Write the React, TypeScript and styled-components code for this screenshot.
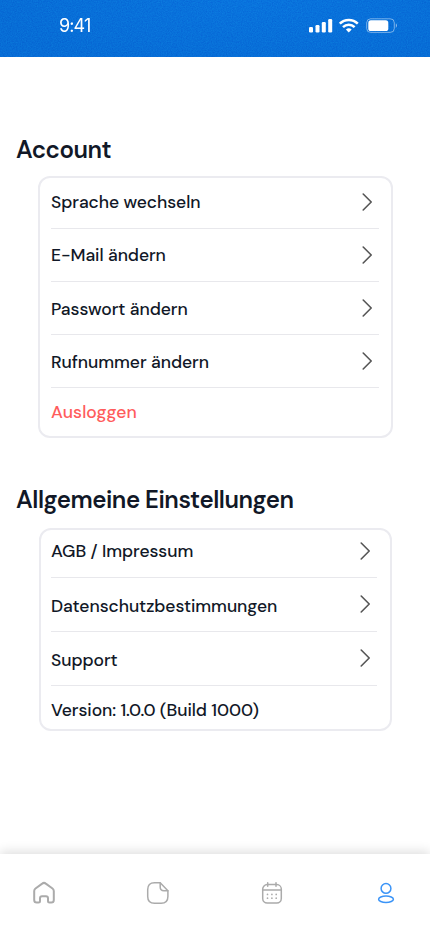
import React from "react";
import styled, { createGlobalStyle } from "styled-components";

const GlobalStyle = createGlobalStyle`
  * { box-sizing: border-box; }
  body { margin: 0; background: #fff; }
`;

const Screen = styled.div`
  width: 430px;
  height: 932px;
  display: flex;
  flex-direction: column;
  background: #fff;
  color: #111827;
  font-family: "DM Sans", "Inter", sans-serif;
  overflow: hidden;
`;

const StatusBar = styled.header`
  position: relative;
  isolation: isolate;
  height: 57px;
  flex: none;
  display: flex;
  justify-content: space-between;
  align-items: flex-start;
  padding: 15px 33px 0 59px;
  background: radial-gradient(ellipse 260px 70px at 58% 0, #0974de, #076dd6);
  color: #fff;
`;

const Grain = styled.svg`
  position: absolute;
  inset: 0;
  width: 100%;
  height: 100%;
  opacity: 0.26;
  mix-blend-mode: soft-light;
`;

const Clock = styled.span`
  position: relative;
  font-family: "Inter", sans-serif;
  font-size: 18px;
  line-height: 22px;
  letter-spacing: -0.9px;
`;

const StatusIcons = styled.svg`
  position: relative;
  width: 89px;
  height: 18px;
  margin-top: 2px;
`;

const Content = styled.main`
  flex: 1;
`;

const Section = styled.section<{ $top: number }>`
  padding-top: ${(p) => p.$top}px;
`;

const Title = styled.h1`
  margin: 0 0 0 16px;
  height: 32px;
  font-size: 24px;
  font-weight: 600;
  line-height: 33px;
  white-space: nowrap;
  letter-spacing: -0.45px;
`;

const Card = styled.div<{ $left: number; $right: number; $gap: number; $inset: number; $end: number }>`
  margin: ${(p) => p.$gap}px ${(p) => p.$right}px 0 ${(p) => p.$left}px;
  padding: 0 ${(p) => p.$end}px 0 ${(p) => p.$inset}px;
  border: 2px solid #ebebf0;
  border-radius: 12px;
`;

const Row = styled.div<{ $height: number; $raise: number; $last?: boolean }>`
  height: ${(p) => p.$height}px;
  display: flex;
  align-items: center;
  justify-content: space-between;
  padding: 0 6px ${(p) => p.$raise}px 0;
  border-bottom: ${(p) => (p.$last ? "0" : "1px solid #e8e8ec")};
`;

const Label = styled.span<{ $drop?: number; $danger?: boolean }>`
  font-size: 17.5px;
  font-weight: 500;
  line-height: 22px;
  margin-top: ${(p) => p.$drop ?? 0}px;
  white-space: nowrap;
  letter-spacing: ${(p) => (p.$danger ? 0.08 : -0.06)}px;
  color: ${(p) => (p.$danger ? "#ff5c5c" : "#111827")};
`;

const Tabs = styled.nav`
  height: 78px;
  flex: none;
  display: flex;
  justify-content: space-between;
  padding: 27px 32px 0;
  background: #fff;
  box-shadow: 0 -3px 10px rgba(0, 0, 0, 0.12);
`;

const TabIcon = styled.svg<{ $active?: boolean }>`
  width: 24px;
  height: 24px;
  fill: none;
  stroke: ${(p) => (p.$active ? "#3b94f7" : "#ababab")};
  stroke-width: 1.5;
  stroke-linecap: round;
  stroke-linejoin: round;
`;

const ChevronIcon = styled.svg`
  width: 12px;
  height: 20px;
  flex: none;
  fill: none;
  stroke: #555;
  stroke-width: 1.6;
  stroke-linecap: round;
  stroke-linejoin: round;
`;

const Chevron = () => (
  <ChevronIcon viewBox="0 0 12 20">
    <path d="M2.2 2l8 8-8 8" />
  </ChevronIcon>
);

type Item = {
  text: string;
  height: number;
  raise: number;
  drop?: number;
  danger?: boolean;
  last?: boolean;
};

const accountItems: Item[] = [
  { text: "Sprache wechseln", height: 51, raise: 2 },
  { text: "E-Mail ändern", height: 53, raise: 0 },
  { text: "Passwort ändern", height: 53, raise: 0, drop: 2 },
  { text: "Rufnummer ändern", height: 53, raise: 0, drop: 2 },
  { text: "Ausloggen", height: 48, raise: 0, danger: true, last: true },
];

const generalItems: Item[] = [
  { text: "AGB / Impressum", height: 48, raise: 5 },
  { text: "Datenschutzbestimmungen", height: 54, raise: 1, drop: 4 },
  { text: "Support", height: 54, raise: 1, drop: 4 },
  { text: "Version: 1.0.0 (Build 1000)", height: 43, raise: 0, drop: 5, last: true },
];

const Rows = ({ items }: { items: Item[] }) => (
  <>
    {items.map((it) => (
      <Row key={it.text} $height={it.height} $raise={it.raise} $last={it.last}>
        <Label $drop={it.drop} $danger={it.danger}>
          {it.text}
        </Label>
        {!it.last && <Chevron />}
      </Row>
    ))}
  </>
);

export default function App() {
  return (
    <Screen>
      <GlobalStyle />
      <StatusBar>
        <Grain>
          <filter id="grain" x="0" y="0" width="100%" height="100%" colorInterpolationFilters="sRGB">
            <feTurbulence type="fractalNoise" baseFrequency="0.8" numOctaves="2" />
            <feColorMatrix values="1 0 0 0 0  1 0 0 0 0  1 0 0 0 0  0 0 0 0 1" />
          </filter>
          <rect width="100%" height="100%" filter="url(#grain)" />
        </Grain>
        <Clock>9:41</Clock>
        <StatusIcons viewBox="0 0 89 18" fill="#fff">
          <rect x="1" y="10" width="4" height="5.5" rx="1.2" />
          <rect x="7.5" y="8" width="4" height="7.5" rx="1.2" />
          <rect x="13.8" y="5" width="4" height="10.5" rx="1.2" />
          <rect x="20.2" y="2" width="4" height="13.5" rx="1.2" />
          <g fill="none" stroke="#fff" strokeWidth="2.5">
            <path d="M31.8 6.7a12.8 12.8 0 0 1 18 0" />
            <path d="M35 10.1a8.2 8.2 0 0 1 11.6 0" />
          </g>
          <path d="M37.9 12.6a4.2 4.2 0 0 1 5.8 0l-2.9 3z" />
          <rect x="58.7" y="1.8" width="27.6" height="13.6" rx="4" fill="none" stroke="#fff" strokeOpacity="0.45" />
          <rect x="60.3" y="3.3" width="20" height="10.7" rx="2.6" />
          <path d="M87.8 6.5v4.2c1.6-.7 1.6-3.5 0-4.2z" fillOpacity="0.5" />
        </StatusIcons>
      </StatusBar>
      <Content>
        <Section $top={76}>
          <Title>Account</Title>
          <Card $left={38} $right={37} $gap={11} $inset={11} $end={12}>
            <Rows items={accountItems} />
          </Card>
        </Section>
        <Section $top={45}>
          <Title>Allgemeine Einstellungen</Title>
          <Card $left={39} $right={38} $gap={13} $inset={10} $end={13}>
            <Rows items={generalItems} />
          </Card>
        </Section>
      </Content>
      <Tabs>
        <TabIcon viewBox="0 0 24 24">
          <path strokeWidth="2" d="M2.2 10.1c0-1.1.5-2 1.3-2.6l6.7-4.9c1-.8 2.6-.8 3.6 0l6.7 4.9c.8.6 1.3 1.5 1.3 2.6v9c0 1.6-1 2.5-2.5 2.5h-1.8c-.9 0-1.5-.6-1.5-1.5v-2.8c0-1.3-.8-2-2-2h-4c-1.2 0-2 .7-2 2v2.8c0 .9-.6 1.5-1.5 1.5H4.7c-1.5 0-2.5-.9-2.5-2.5z" />
        </TabIcon>
        <TabIcon viewBox="0 0 24 24">
          <path d="M14.2 1.8H8.5c-4.6 0-6.8 2.2-6.8 6.8v6.9c0 4.6 2.2 6.8 6.8 6.8h6.6c4.6 0 6.8-2.2 6.8-6.8V9.8z" />
          <path d="M14.2 1.8v4.3c0 2.7 1 3.7 3.7 3.7h4" />
        </TabIcon>
        <TabIcon viewBox="0 0 24 24">
          <rect x="2.7" y="3.6" width="18.6" height="18.5" rx="4.5" />
          <path d="M2.7 9h18.6M7.7 1.8v3.4M16 1.8v3.4" />
          <path strokeWidth="1.7" d="M7.5 13.4h.01M11.9 13.4h.01M16.2 13.4h.01M7.5 17.2h.01M11.9 17.2h.01M16.2 17.2h.01" />
        </TabIcon>
        <TabIcon $active viewBox="0 0 24 24">
          <circle cx="12" cy="7.4" r="4.9" />
          <ellipse cx="12" cy="18.2" rx="7.4" ry="3.2" />
        </TabIcon>
      </Tabs>
    </Screen>
  );
}
